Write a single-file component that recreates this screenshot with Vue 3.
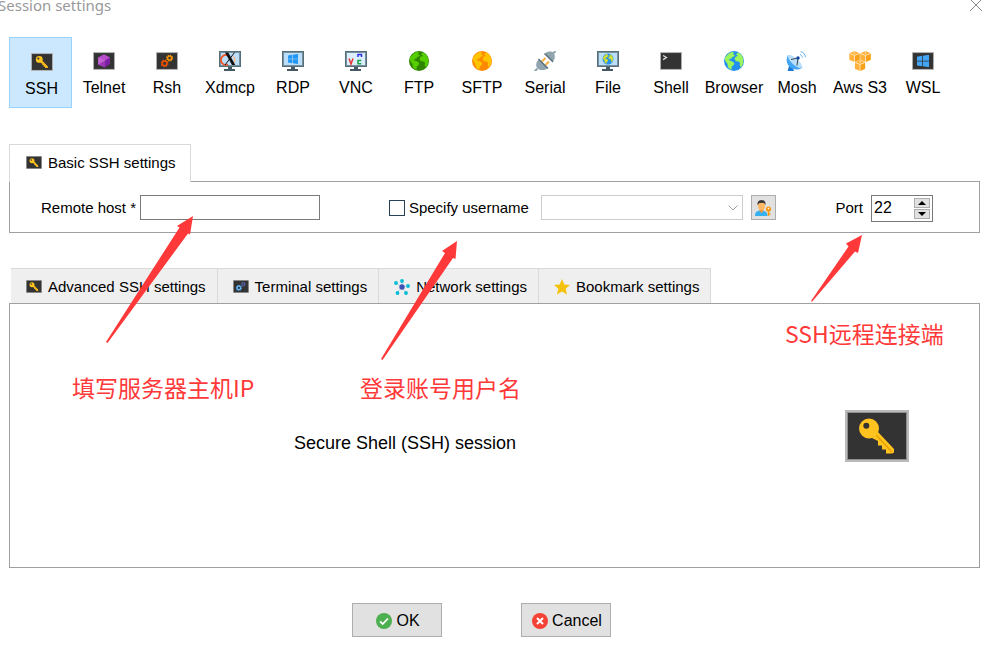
<template>
  <div class="window">
    <svg class="sprite" width="0" height="0" aria-hidden="true">
      <defs>
        <symbol id="screen" viewBox="0 0 64 52">
          <rect width="64" height="52" fill="#bababa" />
          <rect x="2" y="2" width="60" height="48" fill="#8f8f8f" />
          <rect x="3" y="3" width="58" height="46" fill="#333" />
        </symbol>

        <symbol id="monitor" viewBox="0 0 22 20">
          <path d="M9 15h4v3h3v2H5v-2h4z" fill="#455a64" />
          <rect width="22" height="16" fill="#546e7a" />
          <rect x="1" y="1" width="20" height="14" fill="#78909c" />
          <rect x="2" y="2" width="18" height="12" fill="#bbdefb" />
        </symbol>

        <symbol id="land" viewBox="0 0 20 20">
          <path
            d="M5 2.2l3-1.2 2 .6-1 1.6 2 1-1.2 1.6H8.5L7.6 7.6 5.2 8l.4 1.6 2.3.6 2.4 1.8-.7 2.2-1.8 1.1-.4 3.4C4 17.5 3.5 15 3.6 13L1.2 10 1 6.6zM12 3l2.3-1.4c3.2 1.6 5 4.5 5 8.4 0 2.5-.9 4.8-2.6 6.5l-1-2.3.4-2.4-1.8-1.3-2.6-.4-1.2-2.3 1.4-2.2 2-.5z"
          />
        </symbol>

        <symbol id="windows" viewBox="0 0 20 20">
          <path
            d="M0 3l8.500-1.300v7.800H0zM9.700 1.500L20 0v9.500H9.700zM0 10.700h8.500v7.800L0 17.200zM9.700 10.700H20V20L9.700 18.600z"
          />
        </symbol>

        <symbol id="gear" viewBox="0 0 20 20">
          <circle
            cx="10"
            cy="10"
            r="8"
            fill="none"
            stroke="currentColor"
            stroke-width="3.4"
            stroke-dasharray="3.6 2.68"
          />
          <circle cx="10" cy="10" r="5.5" fill="none" stroke="currentColor" stroke-width="3.8" />
        </symbol>

        <symbol id="ssh" viewBox="0 0 64 52">
          <use href="#screen" />
          <path
            d="M33 22l16 17v3.500l-2 1h-6v-4h-4v-4h-4V31l-6-3z"
            fill="#ffc31f"
          />
          <path d="M31 25l16 17" stroke="#e5a000" stroke-width="1.5" />
          <circle cx="24" cy="18.5" r="10" fill="#ffc31f" />
          <circle cx="21.3" cy="15.7" r="3" fill="#333" />
        </symbol>

        <symbol id="telnet" viewBox="0 0 64 52">
          <use href="#screen" />
          <path d="M32 7l17 9v18L34 45 15 37V16z" fill="#9c36b5" />
          <path d="M32 7l17 9-13 8-21-8z" fill="#b84dcb" />
          <path d="M36 24l13-8v18L34 45z" fill="#7b1fa2" />
          <path d="M15 16l21 8-21 13z" fill="#c565d6" />
        </symbol>

        <symbol id="rsh" viewBox="0 0 64 52">
          <use href="#screen" />
          <use href="#gear" x="13" y="21" width="24" height="24" class="gear-red" />
          <use href="#gear" x="29" y="7" width="21" height="21" class="gear-orange" />
        </symbol>

        <symbol id="terminal" viewBox="0 0 64 52">
          <use href="#screen" />
          <use href="#gear" x="11" y="19" width="25" height="25" class="gear-sky" />
          <use href="#gear" x="31" y="7" width="20" height="20" class="gear-indigo" />
        </symbol>

        <symbol id="xdmcp" viewBox="0 0 22 20">
          <use href="#monitor" />
          <path d="M9 4.400A5 5 0 1 0 9 13.500" fill="none" stroke="#f4511e" stroke-width="1.7" />
          <path d="M14 5a5 5 0 0 1-1 8.400" fill="none" stroke="#ffb98f" stroke-width="1.5" />
          <path d="M6 1.500h3.300l7 12.500H13z" fill="#111" />
          <path d="M15.500 1.500L6 14" stroke="#111" stroke-width="1" />
        </symbol>

        <symbol id="rdp" viewBox="0 0 22 20">
          <use href="#monitor" />
          <use href="#windows" x="6" y="3" width="10" height="10" fill="#2196f3" />
        </symbol>

        <symbol id="vnc" viewBox="0 0 22 20">
          <use href="#monitor" />
          <rect x="2" y="2" width="18" height="12" fill="#dceffd" />
          <g fill="none" stroke-width="1.5">
            <path d="M4 7.500L6 13l2-5.500" stroke="#e53935" />
            <path d="M13 6V3.500h3.500V6" stroke="#3030f0" />
            <path d="M16.300 9.500H13V12.700h3.300" stroke="#17a34a" />
          </g>
        </symbol>

        <symbol id="ftp" viewBox="0 0 20 20">
          <circle cx="10" cy="10" r="10" fill="#2f8500" />
          <use href="#land" fill="#55ce00" />
        </symbol>

        <symbol id="sftp" viewBox="0 0 20 20">
          <circle cx="10" cy="10" r="10" fill="#ff8a00" />
          <use href="#land" fill="#ffc400" />
        </symbol>

        <symbol id="browser" viewBox="0 0 20 20">
          <circle cx="10" cy="10" r="10" fill="#2490ee" />
          <use href="#land" fill="#9cf55a" />
        </symbol>

        <symbol id="file" viewBox="0 0 22 20">
          <use href="#monitor" />
          <circle cx="11" cy="8" r="5.500" fill="#2490ee" />
          <use href="#land" x="5.500" y="2.500" width="11" height="11" fill="#cddc39" />
        </symbol>

        <symbol id="serial" viewBox="0 0 22 20">
          <path d="M8 10.500l3.500-3.500M11.500 14l3.500-3.500" stroke="#fbb040" stroke-width="2" />
          <path d="M.5 20.500l3-3M18.500 3l3-3" stroke="#90a4ae" stroke-width="2" />
          <path d="M11 3l7.500 7.500c2.500-1.500 2.500-4.500 2-7L18.500 1c-3-1-6-.5-7.500 2z" fill="#90a4ae" />
          <path d="M5 8.500l8.500 8.500c-2 2.500-6 2.500-8.500 1.500L2.500 16c-1-2.500 0-6 2.500-7.500z" fill="#90a4ae" />
          <path d="M10.500 2.500l8.500 8.500M4.500 8l9.500 9.500" stroke="#546e7a" stroke-width="1.400" />
        </symbol>

        <symbol id="shell" viewBox="0 0 64 52">
          <use href="#screen" />
          <path d="M9 10l10 6-10 6" fill="none" stroke="#e0e0e0" stroke-width="3.500" />
        </symbol>

        <symbol id="mosh" viewBox="0 0 22 20">
          <path d="M3 15l-1.500 5.500H8L6.500 15z" fill="#1976d2" />
          <path d="M2 4c-3 5-1 11 4 13.500 4 2 8 1 10.500-1z" fill="#42a5f5" />
          <ellipse
            cx="9"
            cy="10.500"
            rx="9"
            ry="3.200"
            transform="rotate(42 9 10.500)"
            fill="#bbdefb"
          />
          <path d="M5 8.500l7-1.500-1 7.500" fill="none" stroke="#37474f" stroke-width="1" />
          <circle cx="12" cy="7" r="1.700" fill="#0d47a1" />
          <path
            d="M14 3.500c1.500.500 2 1.500 2.300 3M14.500.700c3 .500 4.500 2.500 5 5.500"
            fill="none"
            stroke="#5aaeef"
            stroke-width="1"
          />
        </symbol>

        <symbol id="cube" viewBox="0 0 10 10">
          <path d="M5 0l4.700 2v6L5 10 .300 8V2z" fill="#ffb13b" />
          <path d="M5 4.200L9.700 2.500V8L5 10z" fill="#f9a11b" />
          <path d="M.5 2.300L5 4l4.500-1.700M5 4v6M5 .500v2" fill="none" stroke="#fff1d6" stroke-width=".7" />
        </symbol>

        <symbol id="aws" viewBox="0 0 22 20">
          <use href="#cube" x="0" y="0" width="11" height="11" />
          <use href="#cube" x="11" y="0" width="11" height="11" />
          <use href="#cube" x="5.500" y="9" width="11" height="11" />
        </symbol>

        <symbol id="wsl" viewBox="0 0 64 52">
          <use href="#screen" />
          <use href="#windows" x="14" y="8" width="36" height="36" fill="#42a5f5" />
        </symbol>

        <symbol id="network" viewBox="0 0 16 16">
          <g stroke="#b3d9e6" stroke-width="1">
            <path d="M8 8V2M8 8L2 4M8 8l6-1M8 8l-5 6M8 8l4 6" />
          </g>
          <circle cx="8" cy="8" r="2.700" fill="#3f51b5" />
          <g fill="#00bcd4">
            <circle cx="8" cy="2" r="1.900" />
            <circle cx="2" cy="4" r="1.900" />
            <circle cx="14" cy="7" r="1.900" />
            <circle cx="3.500" cy="14" r="1.900" />
            <circle cx="12" cy="14" r="1.900" />
          </g>
        </symbol>

        <symbol id="star" viewBox="0 0 16 16">
          <path
            d="M8 0l2.300 5.500 5.700.500-4.300 3.800L13 15.500 8 12.400l-5 3.100 1.300-5.700L0 6l5.700-.500z"
            fill="#f4c20d"
          />
        </symbol>
      </defs>
    </svg>

    <header class="titlebar">
      <h1 class="title">Session settings</h1>
      <button class="close" type="button" aria-label="Close">
        <svg width="14" height="14" viewBox="0 0 14 14">
          <path d="M1 1l12 12M13 1L1 13" stroke="#888" fill="none" />
        </svg>
      </button>
    </header>

    <nav class="toolbar">
      <button
        v-for="item in sessions"
        :key="item.icon"
        type="button"
        class="tool"
        :class="{ active: item.icon === session }"
        @click="session = item.icon"
      >
        <svg class="tool-icon" :class="item.shape"><use :href="`#${item.icon}`" /></svg>
        <span>{{ item.label }}</span>
      </button>
    </nav>

    <section class="basic">
      <div class="tabs">
        <button type="button" class="tab tab-current">
          <svg class="tab-icon"><use href="#ssh" /></svg>
          Basic SSH settings
        </button>
      </div>
      <form class="panel basic-panel" @submit.prevent>
        <div class="group">
          <label for="host">Remote host *</label>
          <input id="host" v-model="host" class="field host" type="text" />
        </div>

        <div class="group">
          <input id="specify" v-model="specify" class="check" type="checkbox" />
          <label for="specify">Specify username</label>
          <div class="combo">
            <select v-model="username" class="field user" aria-label="Username" :disabled="!specify">
              <option value=""></option>
            </select>
            <svg class="chevron" width="10" height="6" viewBox="0 0 10 6">
              <path d="M.5.500L5 5 9.500.500" fill="none" stroke="#a0a0a0" />
            </svg>
          </div>
          <button type="button" class="user-button" aria-label="Manage users">
            <svg width="17" height="16" viewBox="0 0 17 16">
              <path d="M0 16c0-4 2-5.500 6-5.500s6.500 1.500 6.500 5.500z" fill="#35b0f0" />
              <path d="M4.500 8h4v3l-2 2-2-2z" fill="#f39a3c" />
              <ellipse cx="6.500" cy="5.500" rx="3.600" ry="4.500" fill="#ffb866" />
              <path d="M2.500 5C2 1.500 4 0 6.500 0s4.500 1.500 4 5L9 3H4.500z" fill="#3a3a3a" />
              <circle cx="13.500" cy="9" r="2.600" fill="#f59a15" />
              <path d="M13.500 9v7M13.500 14h2" stroke="#f59a15" stroke-width="1.600" />
              <circle cx="13.500" cy="8.500" r=".8" fill="#fff" />
            </svg>
          </button>
        </div>

        <div class="group group-port">
          <label for="port">Port</label>
          <div class="spin">
            <input id="port" v-model.number="port" class="spin-input" type="number" />
            <div class="spin-buttons">
              <button type="button" aria-label="Increase port" @click="port++">
                <svg width="8" height="4" viewBox="0 0 8 4"><path d="M4 0l4 4H0z" /></svg>
              </button>
              <button type="button" aria-label="Decrease port" @click="port--">
                <svg width="8" height="4" viewBox="0 0 8 4"><path d="M0 0h8L4 4z" /></svg>
              </button>
            </div>
          </div>
        </div>
      </form>
    </section>

    <section class="details">
      <div class="tabs tabs-flat">
        <button v-for="tab in tabs" :key="tab.icon" type="button" class="tab">
          <svg class="tab-icon" :class="tab.shape"><use :href="`#${tab.icon}`" /></svg>
          {{ tab.label }}
        </button>
      </div>
      <div class="panel summary">
        <p class="summary-text">Secure Shell (SSH) session</p>
        <svg class="summary-icon"><use href="#ssh" /></svg>
      </div>
    </section>

    <footer class="actions">
      <button type="button" class="action">
        <svg width="16" height="16" viewBox="0 0 16 16">
          <circle cx="8" cy="8" r="8" fill="#4caf50" />
          <path d="M4 8.300l2.700 2.700L12 5.500" fill="none" stroke="#fff" stroke-width="1.800" />
        </svg>
        OK
      </button>
      <button type="button" class="action">
        <svg width="16" height="16" viewBox="0 0 16 16">
          <circle cx="8" cy="8" r="8" fill="#f44336" />
          <path d="M5 5l6 6M11 5l-6 6" stroke="#fff" stroke-width="2" />
        </svg>
        Cancel
      </button>
    </footer>

    <!-- notes drawn over the form -->
    <svg class="arrows" width="997" height="420" aria-hidden="true">
      <path d="M193 216L177 226l2.500 1.500L106 342l1.500 1L188 233.500l2 1z" />
      <path d="M457 241l-15 10 3 2L381 359l1.500 1L453 258l2.500 1z" />
      <path d="M862 235l-16 8.500 2.500 3L811 301l1 .8L855 251.500l3 1.500z" />
    </svg>
    <p class="note note-host">填写服务器主机IP</p>
    <p class="note note-user">登录账号用户名</p>
    <p class="note note-port">SSH远程连接端</p>
  </div>
</template>

<script setup>
import { ref } from "vue";

const session = ref("ssh");
const host = ref("");
const specify = ref(false);
const username = ref("");
const port = ref(22);

const sessions = [
  { icon: "ssh", label: "SSH", shape: "wide" },
  { icon: "telnet", label: "Telnet", shape: "wide" },
  { icon: "rsh", label: "Rsh", shape: "wide" },
  { icon: "xdmcp", label: "Xdmcp" },
  { icon: "rdp", label: "RDP" },
  { icon: "vnc", label: "VNC" },
  { icon: "ftp", label: "FTP" },
  { icon: "sftp", label: "SFTP" },
  { icon: "serial", label: "Serial" },
  { icon: "file", label: "File" },
  { icon: "shell", label: "Shell", shape: "wide" },
  { icon: "browser", label: "Browser" },
  { icon: "mosh", label: "Mosh" },
  { icon: "aws", label: "Aws S3" },
  { icon: "wsl", label: "WSL", shape: "wide" },
];

const tabs = [
  { icon: "ssh", label: "Advanced SSH settings" },
  { icon: "terminal", label: "Terminal settings" },
  { icon: "network", label: "Network settings", shape: "square" },
  { icon: "star", label: "Bookmark settings", shape: "square" },
];
</script>

<style>
body {
  margin: 0;
  background: #fff;
}
</style>

<style scoped>
.window {
  position: relative;
  box-sizing: border-box;
  padding: 0 17px 25px 9px;
  overflow: hidden;
  color: #000;
  font-family: "Liberation Sans", Arial, sans-serif;
  font-size: 15px;
}

.window * {
  box-sizing: border-box;
}

button,
input,
select {
  margin: 0;
  padding: 0;
  border-radius: 0;
  color: inherit;
  font: inherit;
}

.sprite {
  position: absolute;
}

.gear-red {
  color: #e65100;
}

.gear-orange {
  color: #ff9800;
}

.gear-sky {
  color: #64b5f6;
}

.gear-indigo {
  color: #5c6bc0;
}

.titlebar {
  display: flex;
  justify-content: space-between;
  height: 37px;
  margin: 0 -3px 0 -11px;
}

.title {
  margin: 0;
  color: #999;
  font-family: "Noto Sans", sans-serif;
  font-size: 15px;
  font-weight: normal;
  line-height: 10px;
}

.close {
  display: flex;
  align-items: center;
  height: 10px;
  border: 0;
  background: none;
}

.toolbar {
  display: flex;
  flex-wrap: wrap;
}

.tool {
  display: flex;
  flex-direction: column;
  align-items: center;
  gap: 7px;
  width: 63px;
  height: 71px;
  padding: 13px 0 0 1px;
  border: 1px solid transparent;
  background: none;
  font-size: 16px;
  line-height: 20px;
  white-space: nowrap;
}

.tool.active {
  padding: 14px 0 0 2px;
  border-color: #99d1ff;
  background: #cce8ff;
}

.tool-icon {
  flex: none;
  width: 22px;
  height: 20px;
}

.tool-icon.wide {
  padding: 1px 0;
}

.basic {
  margin-top: 36px;
}

.details {
  margin-top: 35px;
}

.tabs {
  display: flex;
}

.tab {
  display: flex;
  align-items: center;
  gap: 6px;
  height: 36px;
  padding: 0 11px 0 15px;
  border: solid #d9d9d9;
  border-width: 1px 1px 0 0;
  background: #efefef;
  white-space: nowrap;
}

.tab-current {
  position: relative;
  z-index: 1;
  height: 38px;
  padding: 0 14px 2px 16px;
  border-width: 1px 1px 0 1px;
  background: #fff;
}

.tabs-flat {
  padding-left: 2px;
}

.tab-icon {
  flex: none;
  width: 16px;
  height: 13px;
}

.tab-icon.square {
  height: 16px;
}

.panel {
  margin-top: -1px;
  border: 1px solid #a0a0a0;
}

.basic-panel {
  display: grid;
  grid-template-columns: 39% 50% 1fr;
  height: 52px;
  padding: 13px 46px 0 31px;
}

.group {
  display: flex;
  align-items: flex-start;
  gap: 4px;
  line-height: 25px;
  white-space: nowrap;
}

.field {
  height: 25px;
  border: 1px solid #7a7a7a;
  background: #fff;
  outline: none;
}

.host {
  width: 180px;
  padding: 0 3px;
}

.check {
  appearance: none;
  width: 16px;
  height: 16px;
  margin-top: 5px;
  border: 1px solid #264257;
  background: #fff;
}

.check:checked {
  background: #264257;
  box-shadow: inset 0 0 0 3px #fff;
}

.combo {
  position: relative;
  margin: 0 4px 0 8px;
}

.user {
  display: block;
  appearance: none;
  width: 202px;
  border-color: #ccc;
  opacity: 1;
}

.chevron {
  position: absolute;
  top: 10px;
  right: 5px;
  pointer-events: none;
}

.user-button {
  display: flex;
  align-items: center;
  justify-content: center;
  width: 25px;
  height: 25px;
  border: 1px solid #adadad;
  background: #e1e1e1;
}

.group-port {
  justify-content: flex-end;
  gap: 8px;
}

.spin {
  display: flex;
  width: 62px;
  height: 27px;
  border: 1px solid #7a7a7a;
}

.spin-input {
  appearance: textfield;
  flex: 1;
  width: 0;
  height: 23px;
  padding-left: 2px;
  border: 0;
  background: none;
  font-size: 16px;
  outline: none;
}

.spin-input::-webkit-inner-spin-button {
  appearance: none;
}

.spin-buttons {
  display: flex;
  flex-direction: column;
  gap: 1px;
  padding: 2px;
}

.spin-buttons button {
  display: flex;
  flex: 1;
  align-items: center;
  justify-content: center;
  width: 16px;
  border: 1px solid #adadad;
  background: #e1e1e1;
}

.tabs-flat + .panel {
  position: relative;
}

.summary {
  display: flex;
  align-items: center;
  gap: 45px;
  height: 265px;
  padding-right: 70px;
}

.summary-text {
  flex: 1;
  margin: 0;
  padding-top: 16px;
  font-size: 18px;
  text-align: center;
}

.summary-icon {
  width: 64px;
  height: 52px;
}

.actions {
  display: flex;
  justify-content: center;
  gap: 79px;
  margin-top: 35px;
  padding-right: 26px;
}

.action {
  display: flex;
  align-items: center;
  justify-content: center;
  gap: 4px;
  width: 90px;
  height: 34px;
  padding: 2px 0 0 2px;
  border: 1px solid #adadad;
  background: #e1e1e1;
  font-size: 16px;
}

.arrows {
  position: absolute;
  top: 0;
  left: 0;
  z-index: 2;
  fill: #ff3939;
  pointer-events: none;
}

.note {
  position: absolute;
  z-index: 2;
  margin: 0;
  color: #ff3939;
  font-family: "Noto Sans CJK SC", sans-serif;
  font-size: 23px;
  line-height: 24px;
  white-space: nowrap;
  pointer-events: none;
}

.note-host {
  top: 375px;
  left: 72px;
}

.note-user {
  top: 375px;
  left: 360px;
}

.note-port {
  top: 321px;
  left: 785px;
}
</style>
